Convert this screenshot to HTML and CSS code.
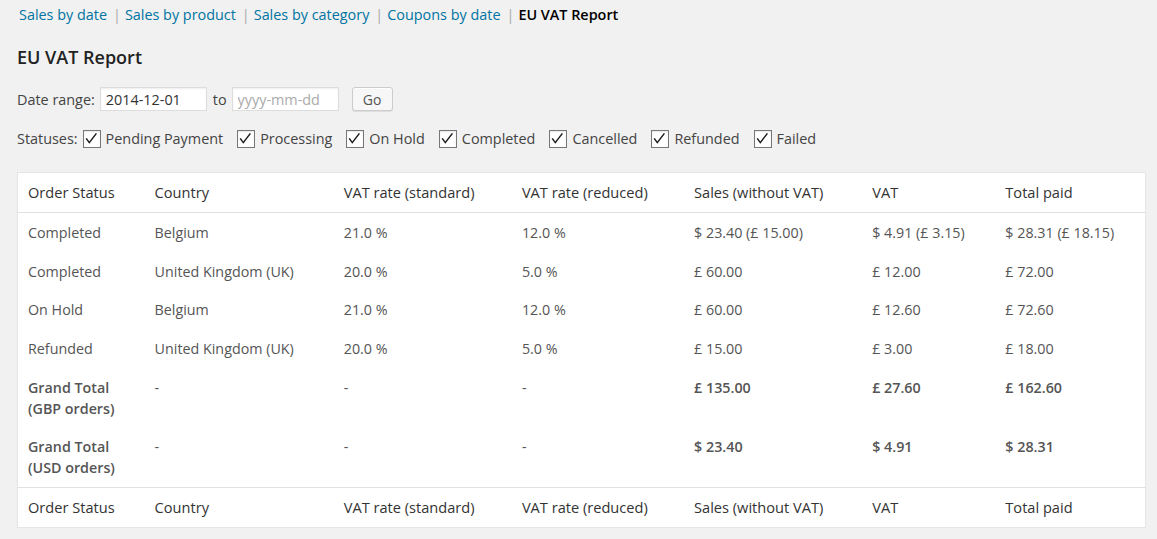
FILE: index.html
```html
<!DOCTYPE html>
<html>
<head>
<meta charset="utf-8">
<link rel="stylesheet" href="styles.css">
</head>
<body>
<div class="wrap">
  <ul class="subsubsub">
    <li><a href="#">Sales by date</a></li>
    <li><span class="sep">|</span><a href="#">Sales by product</a></li>
    <li><span class="sep">|</span><a href="#">Sales by category</a></li>
    <li><span class="sep">|</span><a href="#">Coupons by date</a></li>
    <li><span class="sep">|</span><span class="current">EU VAT Report</span></li>
  </ul>
  <h3 class="title">EU VAT Report</h3>
  <div class="daterange">
    <span class="lbl">Date range:</span>
    <input class="txt" type="text" value="2014-12-01">
    <span class="to">to</span>
    <input class="txt" type="text" placeholder="yyyy-mm-dd">
    <button class="btn">Go</button>
  </div>
  <div class="statuses">
    <span class="lbl">Statuses:</span>
    <label class="cb"><span class="box"><svg viewBox="0 0 18 18" width="18" height="18"><path d="M3.2 8.4 L6.3 12.6 L13.4 3.4" fill="none" stroke="#1a1a1a" stroke-width="1.5"/></svg></span>Pending Payment</label>
    <label class="cb"><span class="box"><svg viewBox="0 0 18 18" width="18" height="18"><path d="M3.2 8.4 L6.3 12.6 L13.4 3.4" fill="none" stroke="#1a1a1a" stroke-width="1.5"/></svg></span>Processing</label>
    <label class="cb"><span class="box"><svg viewBox="0 0 18 18" width="18" height="18"><path d="M3.2 8.4 L6.3 12.6 L13.4 3.4" fill="none" stroke="#1a1a1a" stroke-width="1.5"/></svg></span>On Hold</label>
    <label class="cb"><span class="box"><svg viewBox="0 0 18 18" width="18" height="18"><path d="M3.2 8.4 L6.3 12.6 L13.4 3.4" fill="none" stroke="#1a1a1a" stroke-width="1.5"/></svg></span>Completed</label>
    <label class="cb"><span class="box"><svg viewBox="0 0 18 18" width="18" height="18"><path d="M3.2 8.4 L6.3 12.6 L13.4 3.4" fill="none" stroke="#1a1a1a" stroke-width="1.5"/></svg></span>Cancelled</label>
    <label class="cb"><span class="box"><svg viewBox="0 0 18 18" width="18" height="18"><path d="M3.2 8.4 L6.3 12.6 L13.4 3.4" fill="none" stroke="#1a1a1a" stroke-width="1.5"/></svg></span>Refunded</label>
    <label class="cb"><span class="box"><svg viewBox="0 0 18 18" width="18" height="18"><path d="M3.2 8.4 L6.3 12.6 L13.4 3.4" fill="none" stroke="#1a1a1a" stroke-width="1.5"/></svg></span>Failed</label>
  </div>
  <table class="widefat">
    <colgroup>
      <col class="c1"><col class="c2"><col class="c3"><col class="c4"><col class="c5"><col class="c6"><col class="c7">
    </colgroup>
    <thead>
      <tr><th>Order Status</th><th>Country</th><th>VAT rate (standard)</th><th>VAT rate (reduced)</th><th>Sales (without VAT)</th><th>VAT</th><th>Total paid</th></tr>
    </thead>
    <tbody>
      <tr><td>Completed</td><td>Belgium</td><td>21.0 %</td><td>12.0 %</td><td>$ 23.40 (£ 15.00)</td><td>$ 4.91 (£ 3.15)</td><td>$ 28.31 (£ 18.15)</td></tr>
      <tr><td>Completed</td><td>United Kingdom (UK)</td><td>20.0 %</td><td>5.0 %</td><td>£ 60.00</td><td>£ 12.00</td><td>£ 72.00</td></tr>
      <tr><td>On Hold</td><td>Belgium</td><td>21.0 %</td><td>12.0 %</td><td>£ 60.00</td><td>£ 12.60</td><td>£ 72.60</td></tr>
      <tr><td>Refunded</td><td>United Kingdom (UK)</td><td>20.0 %</td><td>5.0 %</td><td>£ 15.00</td><td>£ 3.00</td><td>£ 18.00</td></tr>
      <tr class="total"><td class="b">Grand Total<br>(GBP orders)</td><td>-</td><td>-</td><td>-</td><td class="b">£ 135.00</td><td class="b">£ 27.60</td><td class="b">£ 162.60</td></tr>
      <tr class="total"><td class="b">Grand Total<br>(USD orders)</td><td>-</td><td>-</td><td>-</td><td class="b">$ 23.40</td><td class="b">$ 4.91</td><td class="b">$ 28.31</td></tr>
    </tbody>
    <tfoot>
      <tr><th>Order Status</th><th>Country</th><th>VAT rate (standard)</th><th>VAT rate (reduced)</th><th>Sales (without VAT)</th><th>VAT</th><th>Total paid</th></tr>
    </tfoot>
  </table>
</div>
</body>
</html>
```
FILE: styles.css
```css
html, body {
  margin: 0;
  padding: 0;
  background: #f1f1f1;
  font-family: "Open Sans", sans-serif;
  font-size: 14.4px;
  color: #444;
}
.wrap {
  padding: 0 11px 0 17px;
}
.subsubsub {
  list-style: none;
  margin: 0;
  padding: 5px 0 0 2px;
  display: flex;
  line-height: 20px;
  font-size: 14.4px;
  height: 25px;
}
.subsubsub li {
  display: flex;
}
.subsubsub a {
  color: #0074a2;
  text-decoration: none;
}
.sep {
  color: #aaa;
  margin: 0 4px 0 6px;
}
.current {
  color: #000;
  font-weight: 600;
}
.title {
  margin: 0;
  padding: 15px 0 0;
  font-size: 18px;
  font-weight: 600;
  color: #222;
  line-height: 24px;
  height: 42px;
}
.daterange {
  display: flex;
  align-items: center;
  height: 24px;
  font-size: 14.4px;
}
.lbl {
  margin-right: 5px;
}
.txt {
  box-sizing: border-box;
  width: 107px;
  height: 24px;
  border: 1px solid #ddd;
  box-shadow: inset 0 1px 2px rgba(0,0,0,.07);
  background: #fff;
  font-family: "Open Sans", sans-serif;
  font-size: 14.4px;
  color: #333;
  padding: 2px 5px;
  margin: 0;
  outline: none;
}
.txt::placeholder {
  color: #aaa;
}
.to {
  margin: 0 5px 0 6px;
}
.btn {
  box-sizing: border-box;
  margin-left: 13px;
  height: 24px;
  width: 41px;
  padding: 0;
  border: 1px solid #ccc;
  border-radius: 3px;
  background: #f7f7f7;
  box-shadow: inset 0 1px 0 #fff, 0 1px 0 rgba(0,0,0,.08);
  font-family: "Open Sans", sans-serif;
  font-size: 14px;
  color: #555;
}
.statuses {
  display: flex;
  align-items: center;
  margin-top: 15px;
  height: 24px;
  font-size: 14.4px;
}
.statuses .lbl {
  margin-right: 5px;
}
.cb {
  display: flex;
  align-items: center;
  margin-right: 14px;
}
.box {
  box-sizing: border-box;
  width: 18px;
  height: 18px;
  border: 1px solid #777;
  background: #fff;
  display: flex;
  align-items: center;
  justify-content: center;
  margin-right: 5px;
  margin-top: 2px;
  box-shadow: inset 0 1px 2px rgba(0,0,0,.1);
  overflow: hidden;
}
.box svg {
  display: block;
  flex: none;
}
.widefat {
  margin-top: 22px;
  width: 100%;
  border-collapse: collapse;
  table-layout: fixed;
  background: #fff;
  border: 1px solid #e5e5e5;
  box-shadow: 0 1px 1px rgba(0,0,0,.04);
}
.c1 { width: 127px; }
.c2 { width: 189px; }
.c3 { width: 178px; }
.c4 { width: 172px; }
.c5 { width: 178px; }
.c6 { width: 133px; }
.c7 { width: 150px; }
.widefat th {
  text-align: left;
  font-weight: 400;
  font-size: 14.6px;
  color: #333;
  padding: 9px 10px 10px;
  line-height: 20px;
}
.widefat thead th {
  border-bottom: 1px solid #e1e1e1;
}
.widefat tfoot th {
  border-top: 1px solid #e1e1e1;
}
.widefat td {
  font-size: 14.3px;
  color: #555;
  padding: 9px 10px 8.7px;
  line-height: 21px;
  vertical-align: top;
}
.widefat td.b {
  font-weight: 600;
}
```
